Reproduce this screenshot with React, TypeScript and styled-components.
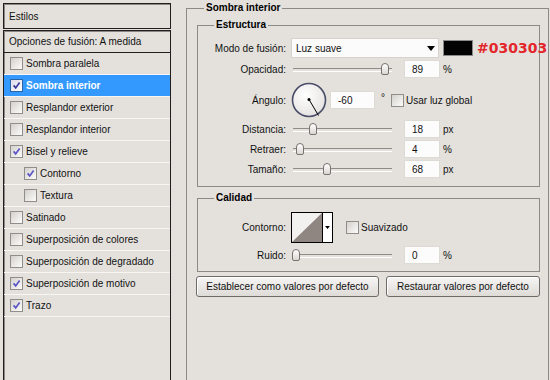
import React from "react";
import styled, { createGlobalStyle, css } from "styled-components";

const GlobalStyle = createGlobalStyle`
  html, body { margin: 0; padding: 0; background: #e4e1dd; overflow: hidden; }
  body { font-family: "Liberation Sans", Arial, sans-serif; font-size: 10px; color: #111; }
  * { box-sizing: border-box; }
`;

const Dialog = styled.div`
  display: flex;
  align-items: flex-start;
  width: 550px;
  height: 380px;
  overflow: hidden;
`;

/* ---------- left styles list ---------- */
const StylesColumn = styled.div`
  flex-shrink: 0;
  width: 168px;
  margin: 3px 0 0 3px;
  display: flex;
  flex-direction: column;
  gap: 1px;
`;

const framed = css`
  border: 1px solid #1f1f1f;
  box-shadow: inset 1px 1px 0 #8b8884;
`;

const HeaderBox = styled.div`
  ${framed};
  height: 26px;
  display: flex;
  align-items: center;
  padding-left: 5px;
`;

const ListBox = styled.div`
  ${framed};
  height: 400px;
  display: flex;
  flex-direction: column;
`;

const BlendRow = styled.div`
  height: 22px;
  flex-shrink: 0;
  border-bottom: 1px solid #1f1f1f;
  display: flex;
  align-items: center;
  padding-left: 5px;
`;

const StyleItem = styled.div<{ $selected?: boolean; $indent?: boolean }>`
  height: 22px;
  flex-shrink: 0;
  display: flex;
  align-items: center;
  gap: 3px;
  padding-left: ${(p) => (p.$indent ? 20 : 6)}px;
  border-bottom: 1px solid #f7f6f4;
  background: ${(p) => (p.$selected ? "#3399ff" : "transparent")};
  color: ${(p) => (p.$selected ? "#fff" : "#111")};
  font-weight: ${(p) => (p.$selected ? "bold" : "normal")};
`;

const CheckBoxFrame = styled.span<{ $onBlue?: boolean }>`
  width: 13px;
  height: 13px;
  flex-shrink: 0;
  display: inline-flex;
  align-items: center;
  justify-content: center;
  border: 1px solid ${(p) => (p.$onBlue ? "#2a64a8" : "#8f8e8b")};
  background: ${(p) =>
    p.$onBlue
      ? "linear-gradient(135deg, #dcdbe8 0%, #ffffff 100%)"
      : "linear-gradient(135deg, #d3d1cd 0%, #ecebe8 60%, #fbfbfa 100%)"};
`;

const CheckBox = ({ checked, onBlue }: { checked?: boolean; onBlue?: boolean }) => (
  <CheckBoxFrame $onBlue={onBlue}>
    {checked && (
      <svg width="9" height="9" viewBox="0 0 9 9">
        <path
          d="M1.6 4.4 L3.7 6.9 L7.6 1.6"
          fill="none"
          stroke={onBlue ? "#3a3a9a" : "#5b55c6"}
          strokeWidth="1.7"
        />
      </svg>
    )}
  </CheckBoxFrame>
);

/* ---------- right panel ---------- */
const Main = styled.div`
  flex-shrink: 0;
  width: 363px;
  margin-left: 15px;
`;

const Group = styled.fieldset<{ $outer?: boolean }>`
  min-width: 0;
  margin: ${(p) => (p.$outer ? "2px 0 0 0" : "5px 0 0 0")};
  padding: ${(p) => (p.$outer ? "0 8px 0 10px" : "0")};
  border: 1px solid #8d8984;
  height: ${(p) => (p.$outer ? "420px" : "auto")};
`;

const Legend = styled.legend<{ $outer?: boolean }>`
  margin-left: ${(p) => (p.$outer ? 7 : 16)}px;
  padding: 0 2px;
  font-weight: bold;
  line-height: 12px;
  color: #000;
`;

const Fields = styled.div<{ $top: number; $bottom: number }>`
  display: flex;
  flex-direction: column;
  gap: 2px;
  padding: ${(p) => p.$top}px 0 ${(p) => p.$bottom}px 0;
`;

const Row = styled.div<{ $h: number; $mt?: number }>`
  display: flex;
  align-items: center;
  height: ${(p) => p.$h}px;
  margin-top: ${(p) => p.$mt ?? 0}px;
  white-space: nowrap;
`;

const Label = styled.span`
  width: 88px;
  flex-shrink: 0;
  text-align: right;
  margin-right: 5px;
`;

const Select = styled.div`
  width: 148px;
  height: 20px;
  flex-shrink: 0;
  display: flex;
  align-items: center;
  justify-content: space-between;
  padding: 0 3px 0 4px;
  background: #fbfbfb;
  border: 1px solid #d6d3cf;
`;

const Arrow = () => (
  <svg width="8" height="5" viewBox="0 0 8 5">
    <path d="M0 0 H8 L4 5 Z" fill="#000" />
  </svg>
);

const Swatch = styled.span<{ $color: string }>`
  width: 30px;
  height: 16px;
  flex-shrink: 0;
  margin-left: 4px;
  background: ${(p) => p.$color};
  border: 1px solid #8a8a8a;
`;

const HexNote = styled.span`
  margin-left: 4px;
  font-family: "DejaVu Sans", Verdana, sans-serif;
  font-weight: bold;
  font-size: 14px;
  color: #e3262b;
`;

const SliderTrack = styled.div`
  position: relative;
  width: 103px;
  height: 18px;
  flex-shrink: 0;
  &::before {
    content: "";
    position: absolute;
    left: 2px;
    right: 2px;
    top: 8px;
    height: 2px;
    border-top: 1px solid #8f8b86;
    border-bottom: 1px solid #ffffff;
  }
`;

const Thumb = styled.span`
  position: absolute;
  top: 3px;
  width: 8px;
  height: 12px;
  border: 1px solid #77736e;
  border-radius: 4px 4px 2px 2px;
  background: linear-gradient(#ffffff, #dad7d3);
`;

const Slider = ({ frac }: { frac: number }) => (
  <SliderTrack>
    <Thumb style={{ left: `${1 + frac * 100}px` }} />
  </SliderTrack>
);

const NumberBox = styled.div<{ $w?: number; $ml?: number }>`
  width: ${(p) => p.$w ?? 36}px;
  height: 18px;
  flex-shrink: 0;
  margin-left: ${(p) => p.$ml ?? 10}px;
  display: flex;
  align-items: center;
  padding-left: 7px;
  background: #fcfcfc;
  border: 1px solid #dedbd7;
`;

const Unit = styled.span`
  margin-left: 3px;
`;

const Degree = styled.span`
  margin-left: 6px;
  align-self: flex-start;
  margin-top: 10px;
`;

const CheckLabel = styled.span<{ $ml: number }>`
  display: inline-flex;
  align-items: center;
  gap: 2px;
  margin-left: ${(p) => p.$ml}px;
`;

const AngleDial = () => (
  <svg width="36" height="36" viewBox="0 0 36 36" style={{ flexShrink: 0 }}>
    <defs>
      <radialGradient id="dialFill" cx="40%" cy="35%" r="70%">
        <stop offset="0%" stopColor="#ffffff" />
        <stop offset="100%" stopColor="#e4e2e0" />
      </radialGradient>
    </defs>
    <circle cx="18" cy="18" r="16.5" fill="url(#dialFill)" stroke="#4a4d68" strokeWidth="1.6" />
    <line x1="18" y1="17.5" x2="27.5" y2="33.5" stroke="#000" strokeWidth="1" />
    <circle cx="18" cy="17.5" r="1.5" fill="#000" />
  </svg>
);

const ContourPicker = styled.div`
  width: 42px;
  height: 31px;
  flex-shrink: 0;
  display: flex;
  border: 1px solid #000;
  background: #fff;
`;

const ContourDrop = styled.div`
  flex: 1;
  display: flex;
  align-items: center;
  justify-content: center;
  border-left: 1px solid #000;
  background: #fff;
  & svg { width: 5px; height: 3px; }
`;

const ButtonRow = styled.div`
  display: flex;
  gap: 7px;
  margin: 4px 0 0 -1px;
`;

const PushButton = styled.button<{ $w: number }>`
  width: ${(p) => p.$w}px;
  height: 21px;
  padding: 0;
  font-family: "Liberation Sans", Arial, sans-serif;
  font-size: 10px;
  color: #111;
  border: 1px solid #6e6c69;
  border-radius: 3px;
  background: linear-gradient(#f7f6f5, #dedbd7);
  box-shadow: inset 1px 1px 0 #ffffff;
`;

const styleItems: { label: string; checked?: boolean; selected?: boolean; indent?: boolean }[] = [
  { label: "Sombra paralela" },
  { label: "Sombra interior", checked: true, selected: true },
  { label: "Resplandor exterior" },
  { label: "Resplandor interior" },
  { label: "Bisel y relieve", checked: true },
  { label: "Contorno", checked: true, indent: true },
  { label: "Textura", indent: true },
  { label: "Satinado" },
  { label: "Superposición de colores" },
  { label: "Superposición de degradado" },
  { label: "Superposición de motivo", checked: true },
  { label: "Trazo", checked: true },
];

export default function App() {
  return (
    <>
      <GlobalStyle />
      <Dialog>
        <StylesColumn>
          <HeaderBox>Estilos</HeaderBox>
          <ListBox>
            <BlendRow>Opciones de fusión: A medida</BlendRow>
            {styleItems.map((it) => (
              <StyleItem key={it.label} $selected={it.selected} $indent={it.indent}>
                <CheckBox checked={it.checked} onBlue={it.selected} />
                <span>{it.label}</span>
              </StyleItem>
            ))}
          </ListBox>
        </StylesColumn>

        <Main>
          <Group $outer>
            <Legend $outer>Sombra interior</Legend>

            <Group>
              <Legend>Estructura</Legend>
              <Fields $top={7} $bottom={8}>
                <Row $h={20}>
                  <Label>Modo de fusión:</Label>
                  <Select>
                    <span>Luz suave</span>
                    <Arrow />
                  </Select>
                  <Swatch $color="#030303" />
                  <HexNote>#030303</HexNote>
                </Row>
                <Row $h={18}>
                  <Label>Opacidad:</Label>
                  <Slider frac={0.89} />
                  <NumberBox>89</NumberBox>
                  <Unit>%</Unit>
                </Row>
                <Row $h={36} $mt={2}>
                  <Label>Ángulo:</Label>
                  <AngleDial />
                  <NumberBox $w={45} $ml={3}>-60</NumberBox>
                  <Degree>°</Degree>
                  <CheckLabel $ml={6}>
                    <CheckBox />
                    <span>Usar luz global</span>
                  </CheckLabel>
                </Row>
                <Row $h={18}>
                  <Label>Distancia:</Label>
                  <Slider frac={0.17} />
                  <NumberBox>18</NumberBox>
                  <Unit>px</Unit>
                </Row>
                <Row $h={18}>
                  <Label>Retraer:</Label>
                  <Slider frac={0.04} />
                  <NumberBox>4</NumberBox>
                  <Unit>%</Unit>
                </Row>
                <Row $h={18}>
                  <Label>Tamaño:</Label>
                  <Slider frac={0.31} />
                  <NumberBox>68</NumberBox>
                  <Unit>px</Unit>
                </Row>
              </Fields>
            </Group>

            <Group>
              <Legend>Calidad</Legend>
              <Fields $top={8} $bottom={7}>
                <Row $h={31}>
                  <Label>Contorno:</Label>
                  <ContourPicker>
                    <svg width="30" height="29" viewBox="0 0 30 29">
                      <rect x="0" y="0" width="30" height="29" fill="#f3f1ef" />
                      <path d="M0 29 L30 0 L30 29 Z" fill="#8f8682" />
                    </svg>
                    <ContourDrop>
                      <Arrow />
                    </ContourDrop>
                  </ContourPicker>
                  <CheckLabel $ml={13}>
                    <CheckBox />
                    <span>Suavizado</span>
                  </CheckLabel>
                </Row>
                <Row $h={18} $mt={1}>
                  <Label>Ruido:</Label>
                  <Slider frac={0} />
                  <NumberBox>0</NumberBox>
                  <Unit>%</Unit>
                </Row>
              </Fields>
            </Group>

            <ButtonRow>
              <PushButton $w={185}>Establecer como valores por defecto</PushButton>
              <PushButton $w={156}>Restaurar valores por defecto</PushButton>
            </ButtonRow>
          </Group>
        </Main>
      </Dialog>
    </>
  );
}
